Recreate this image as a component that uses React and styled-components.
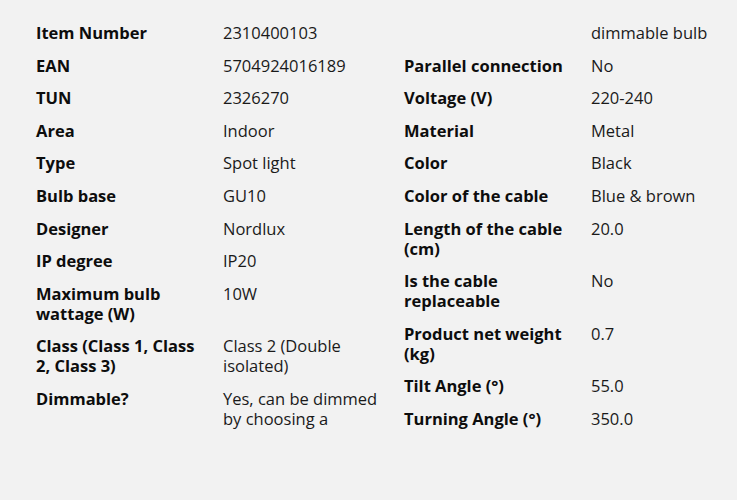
import React from "react";
import styled, { createGlobalStyle } from "styled-components";

const Global = createGlobalStyle`
  html, body {
    margin: 0;
    padding: 0;
    background: #f2f2f2;
    overflow: hidden;
  }
  body {
    font-family: "Open Sans", "Noto Sans", sans-serif;
  }
`;

const Page = styled.div`
  width: 737px;
  height: 500px;
  background: #f2f2f2;
  padding: 23px 0 0 36px;
  box-sizing: border-box;
`;

const SpecList = styled.dl`
  margin: 0;
  height: 410px;
  column-count: 2;
  column-gap: 35px;
  column-fill: auto;
  font-size: 16.5px;
  line-height: 20px;
  orphans: 1;
  widows: 1;
`;

const Row = styled.div`
  display: grid;
  grid-template-columns: 187px 168px;
  margin-bottom: 12.6px;
  orphans: 1;
  widows: 1;
`;

const Label = styled.dt`
  margin: 0;
  padding-right: 20px;
  font-weight: 700;
  color: #0d0d0d;
`;

const Value = styled.dd`
  margin: 0;
  color: #1a1a1a;
  orphans: 1;
  widows: 1;
`;

const Chunk = styled.span``;

const specs = [
  ["Item Number", ["2310400103"]],
  ["EAN", ["5704924016189"]],
  ["TUN", ["2326270"]],
  ["Area", ["Indoor"]],
  ["Type", ["Spot light"]],
  ["Bulb base", ["GU10"]],
  ["Designer", ["Nordlux"]],
  ["IP degree", ["IP20"]],
  ["Maximum bulb wattage (W)", ["10W"]],
  ["Class (Class 1, Class 2, Class 3)", ["Class 2 (Double isolated)"]],
  ["Dimmable?", ["Yes, can be dimmed by choosing a ", "dimmable bulb"]],
  ["Parallel connection", ["No"]],
  ["Voltage (V)", ["220-240"]],
  ["Material", ["Metal"]],
  ["Color", ["Black"]],
  ["Color of the cable", ["Blue & brown"]],
  ["Length of the cable (cm)", ["20.0"]],
  ["Is the cable replaceable", ["No"]],
  ["Product net weight (kg)", ["0.7"]],
  ["Tilt Angle (°)", ["55.0"]],
  ["Turning Angle (°)", ["350.0"]],
];

export default function App() {
  return (
    <Page>
      <Global />
      <SpecList>
        {specs.map(([k, parts]) => (
          <Row key={k}>
            <Label>{k}</Label>
            <Value>
              {parts.map((p, i) => (
                <Chunk key={i}>{p}</Chunk>
              ))}
            </Value>
          </Row>
        ))}
      </SpecList>
    </Page>
  );
}
